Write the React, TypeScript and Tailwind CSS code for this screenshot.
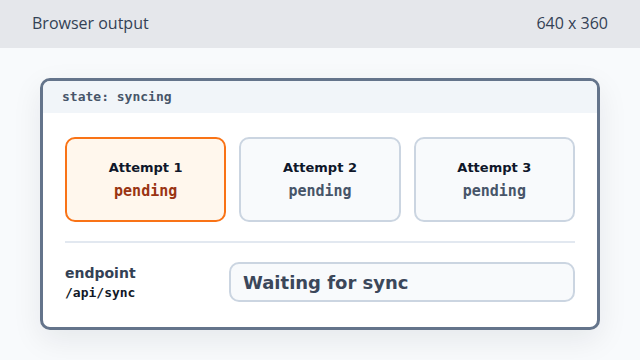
import React from "react";

type Attempt = {
  label: string;
  status: string;
  active: boolean;
};

const attempts: Attempt[] = [
  { label: "Attempt 1", status: "pending", active: true },
  { label: "Attempt 2", status: "pending", active: false },
  { label: "Attempt 3", status: "pending", active: false },
];

const sans = "font-['DejaVu_Sans',sans-serif]";
const mono = "font-['DejaVu_Sans_Mono',monospace]";

function AttemptCard({ attempt }: { attempt: Attempt }) {
  return (
    <div
      className={`h-[85px] rounded-[10px] border-2 flex flex-col items-center justify-center gap-[4px] ${
        attempt.active ? "border-[#f97316] bg-[#fff7ed]" : "border-[#cbd5e1] bg-[#f8fafc]"
      }`}
    >
      <span className={`${sans} text-[13px] leading-[18px] font-bold text-[#0f172a]`}>{attempt.label}</span>
      <span
        className={`${mono} text-[15px] leading-[20px] font-bold ${
          attempt.active ? "text-[#9a3412]" : "text-[#475569]"
        }`}
      >
        {attempt.status}
      </span>
    </div>
  );
}

export default function App() {
  return (
    <div className="w-[640px] h-[360px] bg-[#f8fafc] overflow-hidden">
      {/* Browser chrome */}
      <div className="h-12 bg-[#e5e7eb] px-8 pb-[3px] flex items-center justify-between font-['Open_Sans',sans-serif] text-[16px] text-[#334155]">
        <span>Browser output</span>
        <span>640 x 360</span>
      </div>

      <div className="pt-[30px]">
        <div className="mx-auto w-[560px] rounded-[10px] border-[3px] border-[#64748b] bg-white overflow-hidden shadow-[0_10px_30px_rgba(15,23,42,0.08)]">
          <div className="h-8 bg-[#f1f5f9] pl-[19px] flex items-center">
            <span className={`${mono} text-[13px] font-bold text-[#475569]`}>state: syncing</span>
          </div>

          <div className="px-[22px] pt-6 pb-[25px]">
            <div className="grid grid-cols-3 gap-[13px]">
              {attempts.map((a) => (
                <AttemptCard key={a.label} attempt={a} />
              ))}
            </div>

            <div className="mt-[19px] pt-[19px] border-t-2 border-[#e2e8f0] flex items-center">
              <div className="w-[164px] shrink-0 flex flex-col">
                <span className={`${sans} text-[14px] leading-[20px] font-bold text-[#334155]`}>endpoint</span>
                <span className={`${mono} text-[13px] leading-[19px] font-bold text-[#111827]`}>/api/sync</span>
              </div>
              <div className="flex-1 h-10 rounded-[10px] border-2 border-[#cbd5e1] bg-[#f8fafc] px-3 flex items-center">
                <span className={`${sans} text-[18px] font-bold text-[#3b475a]`}>Waiting for sync</span>
              </div>
            </div>
          </div>
        </div>
      </div>
    </div>
  );
}
